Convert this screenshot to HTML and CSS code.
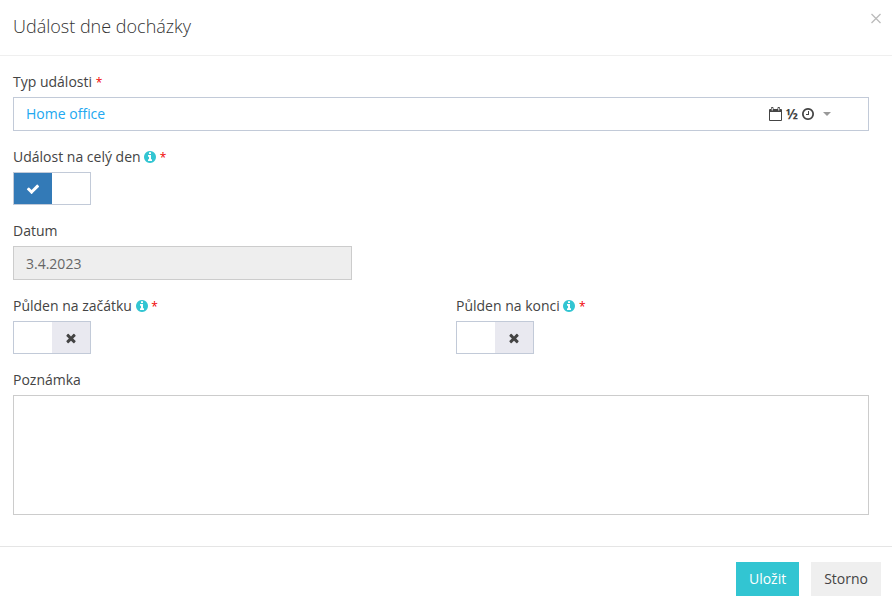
FILE: index.html
```html
<!DOCTYPE html>
<html lang="cs">
<head>
<meta charset="utf-8">
<meta name="viewport" content="width=device-width, initial-scale=1">
<title>Událost dne docházky</title>
<link rel="stylesheet" href="styles.css">
</head>
<body>
<svg class="sprite" aria-hidden="true">
  <symbol id="check" viewBox="0 0 1792 1792"><path d="M1671 566q0 40-28 68l-724 724-136 136q-28 28-68 28t-68-28l-136-136-362-362q-28-28-28-68t28-68l136-136q28-28 68-28t68 28l294 295 656-657q28-28 68-28t68 28l136 136q28 28 28 68z"/></symbol>
  <symbol id="times" viewBox="0 0 1792 1792"><path d="M1490 1322q0 40-28 68l-136 136q-28 28-68 28t-68-28l-294-294-294 294q-28 28-68 28t-68-28l-136-136q-28-28-28-68t28-68l294-294-294-294q-28-28-28-68t28-68l136-136q28-28 68-28t68 28l294 294 294-294q28-28 68-28t68 28l136 136q28 28 28 68t-28 68l-294 294 294 294q28 28 28 68z"/></symbol>
  <symbol id="info" viewBox="128 128 1536 1536"><path d="M1152 1376v-160q0-14-9-23t-23-9h-96v-512q0-14-9-23t-23-9h-320q-14 0-23 9t-9 23v160q0 14 9 23t23 9h96v320h-96q-14 0-23 9t-9 23v160q0 14 9 23t23 9h448q14 0 23-9t9-23zm-128-896v-160q0-14-9-23t-23-9h-192q-14 0-23 9t-9 23v160q0 14 9 23t23 9h192q14 0 23-9t9-23zm640 416q0 209-103 385.500t-279.500 279.500-385.500 103-385.500-103-279.500-279.500-103-385.500 103-385.500 279.500-279.500 385.500-103 385.500 103 279.500 279.500 103 385.500z"/></symbol>
  <symbol id="clock" viewBox="128 128 1536 1536"><path d="M1024 544v448q0 14-9 23t-23 9h-320q-14 0-23-9t-9-23v-64q0-14 9-23t23-9h224v-352q0-14 9-23t23-9h64q14 0 23 9t9 23zm416 352q0-148-73-273t-198-198-273-73-273 73-198 198-73 273 73 273 198 198 273 73 273-73 198-198 73-273zm224 0q0 209-103 385.500t-279.500 279.500-385.500 103-385.500-103-279.500-279.500-103-385.500 103-385.500 279.500-279.500 385.500-103 385.500 103 279.500 279.500 103 385.500z"/></symbol>
  <symbol id="calendar" viewBox="0 0 13 14"><path fill-rule="evenodd" d="M1 2h1V1a1 1 0 0 1 1-1h.5a1 1 0 0 1 1 1v1h4V1a1 1 0 0 1 1-1h.5a1 1 0 0 1 1 1v1h1a1 1 0 0 1 1 1v10a1 1 0 0 1-1 1H1a1 1 0 0 1-1-1V3a1 1 0 0 1 1-1zM1 5v8h11V5zM2.700 1v2.500h1V1zM9.300 1v2.500h1V1z"/></symbol>
</svg>

<form class="modal">
  <header class="modal-header">
    <h1>Událost dne docházky</h1>
    <button type="button" class="close" aria-label="Zavřít"><svg viewBox="0 0 10 10"><path d="M.5.5l9 9M9.500.5l-9 9"/></svg></button>
  </header>

  <main class="modal-body">
    <div class="field">
      <label class="caption" for="type">Typ události <span class="required">*</span></label>
      <div class="picker">
        <select id="type"><option>Home office</option></select>
        <div class="picker-icons">
          <svg class="calendar"><use href="#calendar"/></svg>
          <span>½</span>
          <svg class="clock"><use href="#clock"/></svg>
          <i class="caret"></i>
        </div>
      </div>
    </div>

    <div class="field">
      <label class="caption" for="whole-day">Událost na celý den <svg class="info"><use href="#info"/></svg> <span class="required">*</span></label>
      <label class="switch">
        <input type="checkbox" id="whole-day" checked>
        <span class="on"><svg><use href="#check"/></svg></span>
        <span class="off"><svg><use href="#times"/></svg></span>
      </label>
    </div>

    <div class="columns">
      <div class="field">
        <label class="caption" for="date">Datum</label>
        <input class="control date" id="date" type="text" value="3.4.2023" readonly>
      </div>
    </div>

    <div class="columns">
      <div class="field">
        <label class="caption" for="half-start">Půlden na začátku <svg class="info"><use href="#info"/></svg> <span class="required">*</span></label>
        <label class="switch">
          <input type="checkbox" id="half-start">
          <span class="on"><svg><use href="#check"/></svg></span>
          <span class="off"><svg><use href="#times"/></svg></span>
        </label>
      </div>
      <div class="field">
        <label class="caption" for="half-end">Půlden na konci <svg class="info"><use href="#info"/></svg> <span class="required">*</span></label>
        <label class="switch">
          <input type="checkbox" id="half-end">
          <span class="on"><svg><use href="#check"/></svg></span>
          <span class="off"><svg><use href="#times"/></svg></span>
        </label>
      </div>
    </div>

    <div class="field">
      <label class="caption" for="note">Poznámka</label>
      <textarea class="control note" id="note"></textarea>
    </div>
  </main>

  <footer class="modal-footer">
    <button type="submit" class="btn primary">Uložit</button>
    <button type="button" class="btn">Storno</button>
  </footer>
</form>
</body>
</html>
```

FILE: styles.css
```css
* {
  box-sizing: border-box;
}

body {
  margin: 0;
  background: #fff;
  color: #444;
  font: 14px/20px "Open Sans", "Noto Sans", sans-serif;
}

button,
input,
select,
textarea {
  font: inherit;
  border-radius: 0;
}

svg {
  fill: currentColor;
}

.sprite {
  display: none;
}

.modal-header {
  display: flex;
  justify-content: space-between;
  align-items: flex-start;
  padding: 13px 11px 16px 13px;
  border-bottom: 1px solid #efefef;
}

h1 {
  margin: 0;
  color: #333;
  font-size: 18px;
  line-height: 26px;
  font-weight: 300;
}

.close {
  padding: 0;
  border: 0;
  background: none;
  line-height: 0;
}

.close svg {
  width: 10px;
  height: 11px;
  fill: none;
  stroke: #bbb;
  stroke-width: 1.3;
}

.modal-body {
  display: grid;
  gap: 16px;
  padding: 16px 23px 31px 13px;
}

.columns {
  display: grid;
  grid-template-columns: 1fr 1fr;
  gap: 30px;
}

.field {
  display: grid;
  gap: 5px;
  justify-items: start;
}

.required {
  color: #f00000;
  font-size: 12px;
  line-height: 1;
}

.info {
  width: 12px;
  height: 12px;
  vertical-align: -1px;
  color: #32c5d2;
}

.picker {
  position: relative;
  width: 100%;
}

.picker select {
  display: block;
  appearance: none;
  width: 100%;
  height: 34px;
  padding: 0 12px;
  border: 1px solid #c2cad8;
  background: #fff;
  color: #22a7f0;
}

.picker-icons {
  position: absolute;
  top: 0;
  right: 38px;
  height: 34px;
  display: flex;
  align-items: center;
  gap: 4px;
  color: #444;
  font-weight: 700;
  pointer-events: none;
}

.calendar {
  width: 13px;
  height: 14px;
}

.clock {
  width: 12px;
  height: 12px;
}

.caret {
  margin-left: 5px;
  border: 4px solid transparent;
  border-top-color: #999;
  border-bottom: 0;
}

.control {
  display: block;
  width: 100%;
  padding: 6px 12px;
  border: 1px solid #ccc;
  background: #fff;
  color: #666;
}

.date {
  width: 82%;
  height: 34px;
  background: #eee;
}

.note {
  height: 120px;
  resize: none;
}

.switch {
  position: relative;
  display: grid;
  grid-template-columns: 1fr 1fr;
  width: 78px;
  height: 33px;
  border: 1px solid #c2cad8;
}

.switch input {
  position: absolute;
  inset: 0;
  width: 100%;
  height: 100%;
  margin: 0;
  opacity: 0;
}

.switch span {
  display: flex;
  align-items: center;
  justify-content: center;
}

.switch svg {
  width: 14px;
  height: 14px;
  visibility: hidden;
}

.switch input:checked ~ .on {
  background: #337ab7;
  color: #fff;
}

.switch input:not(:checked) ~ .off {
  background: #e9e9f0;
  color: #444;
}

.switch input:checked ~ .on svg,
.switch input:not(:checked) ~ .off svg {
  visibility: visible;
}

.modal-footer {
  display: flex;
  justify-content: flex-end;
  gap: 12px;
  padding: 15px 11px;
  border-top: 1px solid #e5e5e5;
}

.btn {
  height: 34px;
  padding: 0 13px;
  border: 0;
  background: #efefef;
  color: #444;
}

.primary {
  background: #32c5d2;
  color: #fff;
}
```
